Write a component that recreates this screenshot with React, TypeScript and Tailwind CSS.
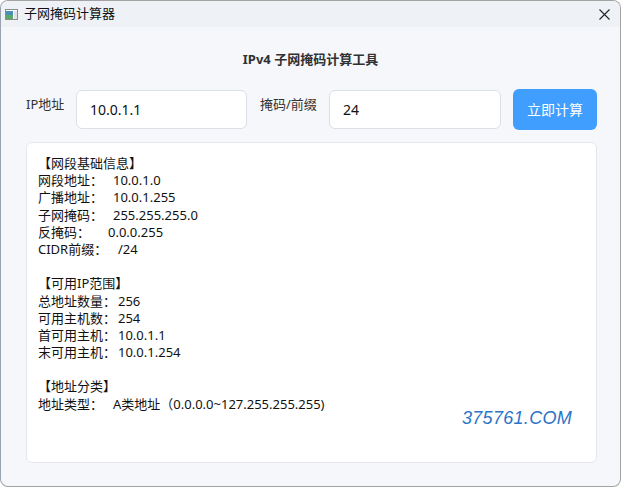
import { ReactNode } from "react";

type Row = { label: string; value: string; labelWidth: string };

const sections: { title: string; rows: Row[] }[] = [
  {
    title: "【网段基础信息】",
    rows: [
      { label: "网段地址：", value: "10.0.1.0", labelWidth: "w-[75px]" },
      { label: "广播地址：", value: "10.0.1.255", labelWidth: "w-[75px]" },
      { label: "子网掩码：", value: "255.255.255.0", labelWidth: "w-[75px]" },
      { label: "反掩码：", value: "0.0.0.255", labelWidth: "w-[70px]" },
      { label: "CIDR前缀：", value: "/24", labelWidth: "w-[80px]" },
    ],
  },
  {
    title: "【可用IP范围】",
    rows: [
      { label: "总地址数量：", value: "256", labelWidth: "w-[80px]" },
      { label: "可用主机数：", value: "254", labelWidth: "w-[80px]" },
      { label: "首可用主机：", value: "10.0.1.1", labelWidth: "w-[80px]" },
      { label: "末可用主机：", value: "10.0.1.254", labelWidth: "w-[80px]" },
    ],
  },
  {
    title: "【地址分类】",
    rows: [
      {
        label: "地址类型：",
        value: "A类地址（0.0.0.0~127.255.255.255)",
        labelWidth: "w-[75px]",
      },
    ],
  },
];

const Input = ({ value, width }: { value: string; width: string }) => (
  <div className={`h-[39px] ${width} shrink-0 rounded-[6px] border border-[#dcdfe6] bg-white flex items-center pl-[13px] text-[14px] text-[#111]`}>
    {value}
  </div>
);

const Line = ({ children }: { children: ReactNode }) => (
  <div className="h-[17.2px] leading-[17.2px] whitespace-nowrap">{children}</div>
);

export default function App() {
  return (
    <div
      className="w-[622px] h-[488px] bg-white"
      style={{ fontFamily: '"Noto Sans", "Noto Sans CJK SC", sans-serif' }}
    >
      <div className="w-[621px] h-[487px] rounded-[8px] border border-[#a3a3a3] border-l-[#9aa3ad] overflow-hidden flex flex-col bg-[#f5f7fa]">
        {/* title bar */}
        <div className="h-[26px] shrink-0 bg-[#eef2f7] flex items-center pl-[4px] pr-[10px]">
          <svg width="13" height="11" viewBox="0 0 13 11" className="mr-[6px]">
            <rect x="0.5" y="0.5" width="12" height="10" fill="#fff" stroke="#8c8c8c" />
            <rect x="1" y="2" width="7" height="8" fill="#4b8fb4" />
            <rect x="1" y="6" width="7" height="4" fill="#5aa86a" />
            <rect x="9" y="2" width="3" height="8" fill="#dfe3e8" />
          </svg>
          <span className="text-[13px] text-[#111]">子网掩码计算器</span>
          <svg width="11" height="11" viewBox="0 0 11 11" className="ml-auto mt-[1px]">
            <path d="M0.5 0.5L10.5 10.5M10.5 0.5L0.5 10.5" stroke="#222" strokeWidth="1.1" />
          </svg>
        </div>

        <div className="flex-1 flex flex-col px-[25px]">
          <h1 className="mt-[22px] text-center text-[13px] font-bold text-[#303133] leading-[20px]">
            IPv4 子网掩码计算工具
          </h1>

          <div className="mt-[20px] flex items-center h-[41px]">
            <span className="w-[50px] shrink-0 -mt-[10px] text-[13px] text-[#333] whitespace-nowrap">IP地址</span>
            <Input value="10.0.1.1" width="w-[171px]" />
            <span className="ml-[13px] mr-[11px] w-[58px] shrink-0 -mt-[10px] text-[13px] text-[#333] whitespace-nowrap">
              掩码/前缀
            </span>
            <Input value="24" width="w-[172px]" />
            <button className="ml-[12px] h-[41px] w-[84px] shrink-0 rounded-[6px] bg-[#409eff] text-white text-[14px]">
              立即计算
            </button>
          </div>

          <div className="mt-[12px] h-[321px] w-[571px] rounded-[6px] border border-[#e4e7ed] bg-white relative pt-[12px] pl-[11px] text-[13px] text-[#111]">
            {sections.map((s, i) => (
              <div key={s.title} className={i > 0 ? "mt-[17.2px]" : ""}>
                <Line>{s.title}</Line>
                {s.rows.map((r) => (
                  <Line key={r.label}>
                    <span className={`inline-block ${r.labelWidth}`}>{r.label}</span>
                    <span>{r.value}</span>
                  </Line>
                ))}
              </div>
            ))}
            <span
              className="absolute left-[435px] top-[262px] text-[18px] italic tracking-[0.3px] text-[#2b74c7]"
              style={{ fontFamily: '"Liberation Sans", sans-serif' }}
            >
              375761.COM
            </span>
          </div>
        </div>
      </div>
    </div>
  );
}
